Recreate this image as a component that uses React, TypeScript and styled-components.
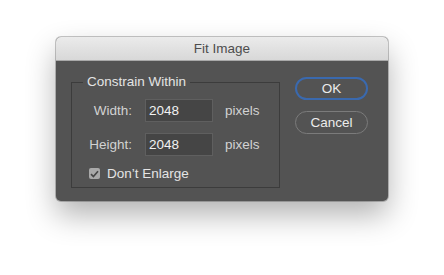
import React from "react"
import styled, { createGlobalStyle } from "styled-components"

const GlobalStyle = createGlobalStyle`
  html, body {
    margin: 0;
    padding: 0;
    background: #ffffff;
  }
  body {
    font-family: "Liberation Sans", Arial, sans-serif;
    -webkit-font-smoothing: antialiased;
  }
`

const Page = styled.div`
  width: 444px;
  height: 275px;
  box-sizing: border-box;
  padding: 37px 0 0 56px;
`

const Window = styled.div`
  width: 332px;
  height: 164px;
  border-radius: 5px;
  overflow: hidden;
  background: #535353;
  box-shadow: 0 0 0 1px rgba(0, 0, 0, 0.22), 0 14px 30px rgba(0, 0, 0, 0.3);
  display: flex;
  flex-direction: column;
`

const TitleBar = styled.div`
  height: 23px;
  flex: none;
  display: flex;
  align-items: center;
  justify-content: center;
  background: linear-gradient(#ebebeb, #d8d8d8);
  border-bottom: 1px solid #a9a9a9;
  color: #4d4d4d;
  font-size: 13.5px;
`

const Body = styled.div`
  display: flex;
  padding: 14px 20px 0 15px;
  gap: 15px;
`

const Group = styled.fieldset`
  margin: 0;
  width: 209px;
  height: 113px;
  box-sizing: border-box;
  padding: 10px 0 0 0;
  border: 1px solid #3c3c3c;
  display: flex;
  flex-direction: column;
  gap: 11px;
`

const Legend = styled.legend`
  margin-left: 11px;
  padding: 0 4px;
  color: #e4e4e4;
  font-size: 13.5px;
  line-height: 14px;
`

const Row = styled.div`
  display: flex;
  align-items: center;
  gap: 13px;
`

const Label = styled.span`
  width: 60px;
  text-align: right;
  color: #d2d2d2;
  font-size: 13.5px;
`

const Field = styled.div`
  width: 68px;
  height: 23px;
  box-sizing: border-box;
  border: 1px solid #5f5f5f;
  background: #454545;
  color: #f2f2f2;
  font-size: 13.5px;
  display: flex;
  align-items: center;
  padding-left: 3px;
`

const Unit = styled.span`
  color: #d2d2d2;
  font-size: 13.5px;
  margin-left: -1px;
`

const CheckRow = styled.div`
  display: flex;
  align-items: center;
  gap: 7px;
  padding-left: 17px;
  margin-top: -1px;
  color: #e4e4e4;
  font-size: 13.5px;
`

const Box = styled.span`
  width: 11px;
  height: 11px;
  border-radius: 2px;
  background: #a9a9a9;
  display: flex;
  align-items: center;
  justify-content: center;
`

const Buttons = styled.div`
  display: flex;
  flex-direction: column;
  gap: 11px;
  padding-top: 2px;
`

const Button = styled.div<{ $primary?: boolean }>`
  width: 73px;
  height: 23px;
  box-sizing: border-box;
  border-radius: 12px;
  border: ${p => (p.$primary ? "2px solid #3a69ae" : "1px solid #7b7b7b")};
  display: flex;
  align-items: center;
  justify-content: center;
  color: #ececec;
  font-size: 13.5px;
`

const Check = () => (
  <svg width="9" height="8" viewBox="0 0 9 8">
    <path d="M1 4.2 L3.4 6.5 L8 1.3" fill="none" stroke="#474747" strokeWidth="1.7" />
  </svg>
)

export default function App() {
  return (
    <Page>
      <GlobalStyle />
      <Window>
        <TitleBar>Fit Image</TitleBar>
        <Body>
          <Group>
            <Legend>Constrain Within</Legend>
            <Row>
              <Label>Width:</Label>
              <Field>2048</Field>
              <Unit>pixels</Unit>
            </Row>
            <Row>
              <Label>Height:</Label>
              <Field>2048</Field>
              <Unit>pixels</Unit>
            </Row>
            <CheckRow>
              <Box>
                <Check />
              </Box>
              Don’t Enlarge
            </CheckRow>
          </Group>
          <Buttons>
            <Button $primary>OK</Button>
            <Button>Cancel</Button>
          </Buttons>
        </Body>
      </Window>
    </Page>
  )
}
